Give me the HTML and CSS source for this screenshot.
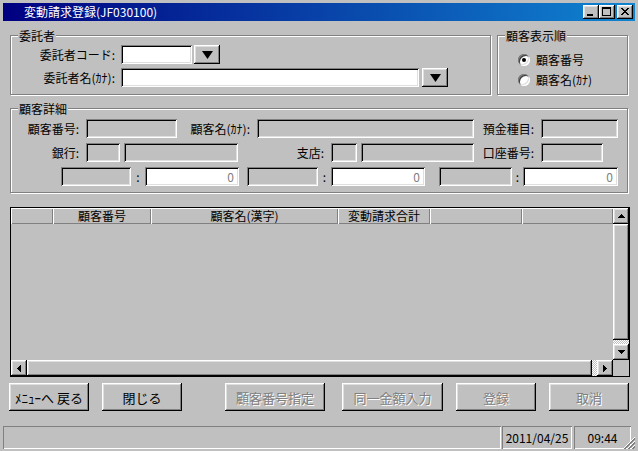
FILE: index.html
```html
<!DOCTYPE html>
<html lang="ja">
<head>
<meta charset="utf-8">
<title>変動請求登録(JF030100)</title>
<link rel="stylesheet" href="styles.css">
</head>
<body>
<div class="window">
  <div class="titlebar">
    <span class="title">変動請求登録(JF030100)</span>
    <div class="tbtns">
      <span class="tbtn raised"><svg width="16" height="14" viewBox="0 0 16 14"><rect x="4" y="9" width="6" height="2"/></svg></span>
      <span class="tbtn raised"><svg width="16" height="14" viewBox="0 0 16 14"><path fill-rule="evenodd" d="M3 2h9v9h-9z M4 4h7v6h-7z"/></svg></span>
      <span class="tbtn raised close"><svg width="16" height="14" viewBox="0 0 16 14"><path d="M4 3h2v1h-2z M10 3h2v1h-2z M5 4h2v1h-2z M9 4h2v1h-2z M6 5h4v1h-4z M7 6h2v1h-2z M6 7h4v1h-4z M5 8h2v1h-2z M9 8h2v1h-2z M4 9h2v1h-2z M10 9h2v1h-2z"/></svg></span>
    </div>
  </div>

  <div class="client">
    <div class="toprow">
      <div class="group g-itaku">
        <div class="gtitle">委託者</div>
        <div class="frow r1">
          <span class="flabel">委託者コード:</span>
          <span class="fld w71"></span>
          <span class="drop raised ml2"><svg width="11" height="8" viewBox="0 0 11 8"><path d="M0 0h11L5.5 8z"/></svg></span>
        </div>
        <div class="frow r2">
          <span class="flabel">委託者名(ｶﾅ):</span>
          <span class="fld w298"></span>
          <span class="drop raised ml3"><svg width="11" height="8" viewBox="0 0 11 8"><path d="M0 0h11L5.5 8z"/></svg></span>
        </div>
      </div>
      <div class="group g-order">
        <div class="gtitle">顧客表示順</div>
        <div class="rrow first"><span class="radio on"></span><span class="rtext">顧客番号</span></div>
        <div class="rrow"><span class="radio"></span><span class="rtext">顧客名(ｶﾅ)</span></div>
      </div>
    </div>

    <div class="group g-detail">
      <div class="gtitle">顧客詳細</div>
      <div class="drow first">
        <span class="dlabel w71">顧客番号:</span><span class="fld dis w91 ml4"></span>
        <span class="dlabel w76">顧客名(ｶﾅ):</span><span class="fld dis w217 ml4"></span>
        <span class="dlabel w63">預金種目:</span><span class="fld dis w77 ml4"></span>
      </div>
      <div class="drow">
        <span class="dlabel w71">銀行:</span><span class="fld dis w34 ml4"></span><span class="fld dis w114 ml4"></span>
        <span class="dlabel w89">支店:</span><span class="fld dis w26 ml4"></span><span class="fld dis w113 ml4"></span>
        <span class="dlabel w63">口座番号:</span><span class="fld dis w62 ml4"></span>
      </div>
      <div class="drow">
        <span class="fld dis w70 ml50"></span><span class="colon w14">:</span><span class="fld num w94">0</span>
        <span class="fld dis w71 ml8"></span><span class="colon w13">:</span><span class="fld num w94">0</span>
        <span class="fld dis w73 ml14"></span><span class="colon w11">:</span><span class="fld num w95">0</span>
      </div>
    </div>

    <div class="grid">
      <div class="gmain">
        <div class="ghead">
          <span class="hc c0"></span>
          <span class="hc c1">顧客番号</span>
          <span class="hc c2">顧客名(漢字)</span>
          <span class="hc c3">変動請求合計</span>
          <span class="hc c4"></span>
          <span class="hc c5"></span>
        </div>
      </div>
      <div class="vscroll">
        <span class="sbtn raised"><svg width="7" height="4" viewBox="0 0 7 4"><path d="M3 0h1v1h-1z M2 1h3v1h-3z M1 2h5v1h-5z M0 3h7v1h-7z"/></svg></span>
        <div class="track vtrack"><div class="thumb raised"></div></div>
        <span class="sbtn raised"><svg width="7" height="4" viewBox="0 0 7 4"><path d="M0 0h7v1h-7z M1 1h5v1h-5z M2 2h3v1h-3z M3 3h1v1h-1z"/></svg></span>
      </div>
      <div class="hscroll">
        <span class="sbtn raised"><svg width="4" height="7" viewBox="0 0 4 7"><path d="M0 3h1v1h-1z M1 2h1v3h-1z M2 1h1v5h-1z M3 0h1v7h-1z"/></svg></span>
        <div class="track htrack"><div class="thumb raised"></div></div>
        <span class="sbtn raised"><svg width="4" height="7" viewBox="0 0 4 7"><path d="M0 0h1v7h-1z M1 1h1v5h-1z M2 2h1v3h-1z M3 3h1v1h-1z"/></svg></span>
      </div>
      <div class="corner"></div>
    </div>

    <div class="buttons">
      <button class="btn raised">ﾒﾆｭｰへ 戻る</button>
      <button class="btn raised ml13">閉じる</button>
      <button class="btn raised dis w100 ml43">顧客番号指定</button>
      <button class="btn raised dis w101 ml17">同一金額入力</button>
      <button class="btn raised dis ml13">登録</button>
      <button class="btn raised dis ml13">取消</button>
    </div>
  </div>

  <div class="statusbar">
    <div class="sp sp-main"></div>
    <div class="sp sp-date">2011/04/25</div>
    <div class="sp sp-time">09:44</div>
  </div>
  <svg class="grip" width="12" height="12" viewBox="0 0 12 12">
    <line x1="0" y1="12" x2="12" y2="0" stroke="#fff"/>
    <line x1="1" y1="12" x2="12" y2="1" stroke="#808080"/>
    <line x1="2" y1="12" x2="12" y2="2" stroke="#808080"/>
    <line x1="4" y1="12" x2="12" y2="4" stroke="#fff"/>
    <line x1="5" y1="12" x2="12" y2="5" stroke="#808080"/>
    <line x1="6" y1="12" x2="12" y2="6" stroke="#808080"/>
    <line x1="8" y1="12" x2="12" y2="8" stroke="#fff"/>
    <line x1="9" y1="12" x2="12" y2="9" stroke="#808080"/>
    <line x1="10" y1="12" x2="12" y2="10" stroke="#808080"/>
  </svg>
</div>
</body>
</html>
```

FILE: styles.css
```css
* { box-sizing: border-box; }
html, body { margin: 0; padding: 0; }
body {
  background: #c0c0c0;
  font: 12px/1 "Noto Sans CJK JP", "Noto Sans CJK SC", sans-serif;
  color: #000;
}

.window {
  position: relative;
  width: 638px;
  height: 451px;
  padding: 3px 3px 2px;
  background: #c0c0c0;
  display: flex;
  flex-direction: column;
  overflow: hidden;
}

.raised {
  box-shadow: inset -1px -1px #000, inset 1px 1px #fff, inset -2px -2px #808080, inset 2px 2px #dfdfdf;
}

/* title bar */
.titlebar {
  height: 18px;
  flex: none;
  display: flex;
  align-items: center;
  padding: 0 2px 0 21px;
  background: linear-gradient(to right, #000080, #1084d0);
  color: #fff;
}
.title { line-height: 18px; white-space: nowrap; }
.tbtns { margin-left: auto; display: flex; }
.tbtn {
  width: 16px;
  height: 14px;
  background: #c0c0c0;
  display: block;
}
.tbtn svg { display: block; shape-rendering: crispEdges; }
.tbtn.close { margin-left: 2px; }

/* client */
.client { padding: 14px 7px 0; display: flex; flex-direction: column; }

.toprow { display: flex; gap: 6px; }

.group {
  border: 1px solid #808080;
  box-shadow: inset 1px 1px #fff, 1px 1px #fff;
  display: flex;
  flex-direction: column;
}
.gtitle {
  align-self: flex-start;
  margin: -7px 0 0 7px;
  padding: 0 1px;
  line-height: 13px;
  background: #c0c0c0;
  white-space: nowrap;
}

.g-itaku { width: 481px; height: 60px; }
.g-order { width: 131px; height: 60px; }

.frow { display: flex; height: 19px; }
.frow.r1 { margin-top: 3px; }
.frow.r2 { margin-top: 4px; }
.flabel {
  width: 107px;
  margin-right: 3px;
  padding-right: 3px;
  text-align: right;
  line-height: 19px;
  white-space: nowrap;
}

.fld {
  height: 19px;
  background: #fff;
  box-shadow: inset 1px 1px #808080, inset -1px -1px #fff, inset 2px 2px #000, inset -2px -2px #dfdfdf;
  flex: none;
}
.fld.dis { background: #c0c0c0; }
.fld.num {
  display: flex;
  justify-content: flex-end;
  align-items: center;
  padding-right: 5px;
  color: #808080;
  line-height: 19px;
}

.drop {
  width: 26px;
  height: 19px;
  background: #c0c0c0;
  display: flex;
  align-items: center;
  justify-content: center;
  flex: none;
}
.drop svg { display: block; }

.rrow { display: flex; align-items: center; height: 14px; margin-top: 6px; padding-left: 20px; }
.rrow.first { margin-top: 11px; }
.radio {
  width: 12px;
  height: 12px;
  border-radius: 50%;
  background: #fff;
  box-shadow: inset 1px 1px #808080, inset -1px -1px #fff, inset 2px 2px #404040, inset -2px -2px #dfdfdf;
  display: flex;
  align-items: center;
  justify-content: center;
  flex: none;
}
.radio.on::after {
  content: "";
  width: 4px;
  height: 4px;
  border-radius: 50%;
  background: #000;
}
.rtext { margin-left: 6px; line-height: 14px; white-space: nowrap; }

.g-detail { width: 618px; height: 85px; margin-top: 13px; }
.drow { display: flex; height: 19px; margin-top: 5px; }
.drow.first { margin-top: 4px; }
.dlabel { text-align: right; padding-right: 3px; line-height: 19px; white-space: nowrap; flex: none; }
.colon { text-align: center; line-height: 19px; flex: none; }

/* widths and margins */
.w11 { width: 11px; } .w13 { width: 13px; } .w14 { width: 14px; }
.w26 { width: 26px; } .w34 { width: 34px; } .w62 { width: 62px; }
.w63 { width: 63px; } .w70 { width: 70px; } .w71 { width: 71px; }
.w73 { width: 73px; } .w76 { width: 76px; } .w77 { width: 77px; }
.w89 { width: 89px; } .w91 { width: 91px; } .w94 { width: 94px; }
.w95 { width: 95px; } .w100 { width: 100px; } .w101 { width: 101px; }
.w113 { width: 113px; } .w114 { width: 114px; } .w217 { width: 217px; }
.w298 { width: 298px; }
.ml2 { margin-left: 2px; } .ml3 { margin-left: 3px; } .ml4 { margin-left: 4px; }
.ml8 { margin-left: 8px; } .ml13 { margin-left: 13px; } .ml14 { margin-left: 14px; }
.ml17 { margin-left: 17px; } .ml43 { margin-left: 43px; } .ml50 { margin-left: 50px; }

/* grid */
.grid {
  margin-top: 14px;
  width: 620px;
  height: 170px;
  border: 1px solid #000;
  display: grid;
  grid-template-columns: 1fr 16px;
  grid-template-rows: 1fr 16px;
}
.gmain { background: #c0c0c0; overflow: hidden; }
.ghead { display: flex; height: 16px; }
.hc {
  height: 16px;
  line-height: 16px;
  text-align: center;
  white-space: nowrap;
  box-shadow: inset 1px 1px #fff, inset -1px -1px #808080;
  flex: none;
}
.c0 { width: 42px; } .c1 { width: 98px; } .c2 { width: 187px; }
.c3 { width: 92px; } .c4 { width: 92px; } .c5 { width: 91px; }

.vscroll { display: flex; flex-direction: column; }
.hscroll { display: flex; }
.sbtn {
  width: 16px;
  height: 16px;
  background: #c0c0c0;
  display: flex;
  align-items: center;
  justify-content: center;
  flex: none;
}
.sbtn svg { display: block; shape-rendering: crispEdges; }
.track {
  flex: 1;
  display: flex;
  background: conic-gradient(#fff 25%, #c0c0c0 0 50%, #fff 0 75%, #c0c0c0 0) 0 0 / 2px 2px;
}
.vtrack { flex-direction: column; }
.thumb { flex: 1; background: #c0c0c0; }
.vtrack .thumb { margin-bottom: 4px; }
.htrack .thumb { margin-right: 5px; }
.corner { background: #c0c0c0; }

/* buttons */
.buttons { display: flex; margin-top: 6px; margin-left: -1px; }
.btn {
  width: 80px;
  height: 28px;
  padding: 0;
  border: 0;
  background: #c0c0c0;
  font: 13px/1 "Noto Sans CJK JP", "Noto Sans CJK SC", sans-serif;
  color: #000;
  white-space: nowrap;
  flex: none;
}
.btn.w100 { width: 100px; }
.btn.w101 { width: 101px; }
.btn.dis { color: #808080; text-shadow: 1px 1px #fff; }

/* status bar */
.statusbar { display: flex; height: 23px; margin-top: 15px; flex: none; }
.sp {
  height: 23px;
  line-height: 23px;
  text-align: center;
  box-shadow: inset 1px 1px #808080, inset -1px -1px #fff;
  white-space: nowrap;
}
.sp-main { width: 498px; }
.sp-date { width: 70px; margin-left: 1px; }
.sp-time { width: 57px; margin-left: 2px; }

.grip { position: absolute; right: 3px; bottom: 2px; display: block; }
```
